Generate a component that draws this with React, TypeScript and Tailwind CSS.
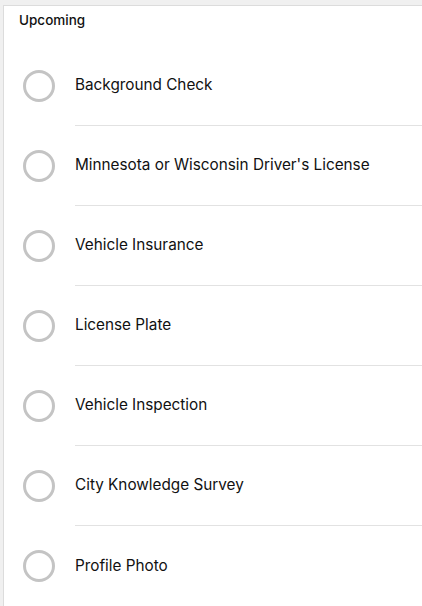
import React from 'react';

const steps = [
    'Background Check',
    "Minnesota or Wisconsin Driver's License",
    'Vehicle Insurance',
    'License Plate',
    'Vehicle Inspection',
    'City Knowledge Survey',
    'Profile Photo',
];

export default function App() {
    return (
        <div className="min-h-[606px] w-[422px] bg-[#f0f0f0] pl-[3px] pt-[5px] overflow-hidden" style={{ fontFamily: 'Inter, "Liberation Sans", sans-serif' }}>
            <div className="bg-white border-l border-t border-[#dcdcdc] min-h-[601px]">
                <div className="h-[40px] pl-[15px] pt-[6px] text-[13.5px] leading-[16px] font-medium text-[#111]">Upcoming</div>
                {steps.map((s, i) => (
                    <div key={s} className="flex h-[80px]">
                        <div className="w-[71px] shrink-0 flex items-center pl-[19px]">
                            <span className="block w-[32px] h-[32px] rounded-full border-[3px] border-[#c4c4c4]" />
                        </div>
                        <div className={i < steps.length - 1 ? 'flex-1 flex items-center border-b border-[#e2e2e2] text-[15.3px] text-[#111]' : 'flex-1 flex items-center text-[15.3px] text-[#111]'}>{s}</div>
                    </div>
                ))}
            </div>
        </div>
    );
}
